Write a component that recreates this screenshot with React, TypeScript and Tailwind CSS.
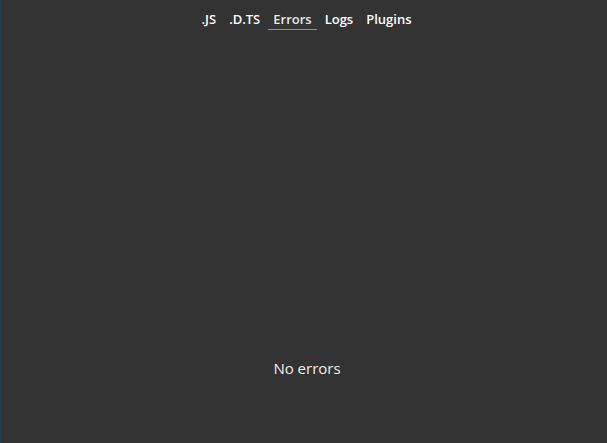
const tabs = ['.JS', '.D.TS', 'Errors', 'Logs', 'Plugins'];

export default function App() {
  const active = 'Errors';
  return (
    <div
      className="w-[607px] h-[443px] bg-[#333333] border-l border-[#2b3a48] flex flex-col text-[#f2f2f2]"
      style={{ fontFamily: '"Open Sans", "Noto Sans", sans-serif' }}
    >
      <div className="flex justify-center gap-[3px] pt-[8px] pl-[5px]">
        {tabs.map((tab) => (
          <button
            key={tab}
            className={
              tab === active
                ? 'px-[5px] h-[22px] text-[13px] font-semibold leading-[20px] text-[#e8e8e8] border-b border-[#7d93cc]'
                : 'px-[5px] h-[22px] text-[13px] font-semibold leading-[20px] text-white border-b border-transparent'
            }
          >
            {tab}
          </button>
        ))}
      </div>
      <div className="flex justify-center pt-[328px] pl-[6px]">
        <p className="text-[15px] leading-[20px] text-[#ececec]">No errors</p>
      </div>
    </div>
  );
}
